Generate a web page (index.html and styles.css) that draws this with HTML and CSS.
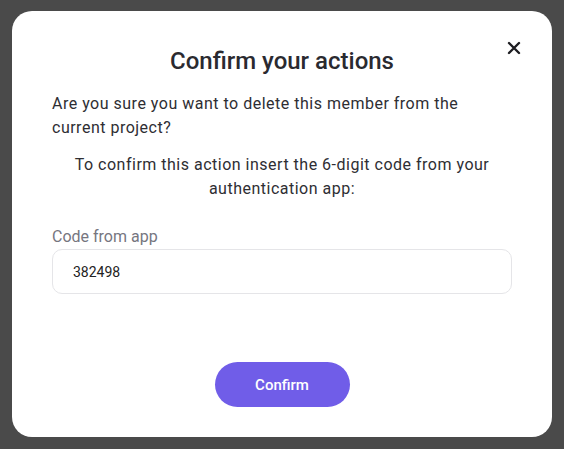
FILE: index.html
```html
<!DOCTYPE html>
<html>
<head>
<meta charset="utf-8">
<link rel="stylesheet" href="styles.css">
</head>
<body>
<div class="overlay">
  <div class="modal">
    <button class="close" aria-label="Close">
      <svg width="14" height="14" viewBox="0 0 14 14"><path d="M2 2L12 12M12 2L2 12" stroke="#1d1d22" stroke-width="2.4" stroke-linecap="round"/></svg>
    </button>
    <h1 class="title">Confirm your actions</h1>
    <p class="text">Are you sure you want to delete this member from the current project?</p>
    <p class="text center">To confirm this action insert the 6-digit code from your authentication app:</p>
    <label class="field">
      <span class="label">Code from app</span>
      <span class="input">382498</span>
    </label>
    <div class="actions">
      <button class="btn">Confirm</button>
    </div>
  </div>
</div>
</body>
</html>
```
FILE: styles.css
```css
* { box-sizing: border-box; }
html, body { margin: 0; padding: 0; }
body {
  background: #4a4a4a;
  font-family: Roboto, "Noto Sans", sans-serif;
  width: 564px;
  height: 449px;
  overflow: hidden;
}
.overlay {
  padding: 11px 12px 12px 12px;
}
.modal {
  position: relative;
  background: #fff;
  border-radius: 20px;
  width: 540px;
  height: 426px;
  padding: 35px 40px 30px 40px;
  display: flex;
  flex-direction: column;
}
.close {
  position: absolute;
  top: 30px;
  right: 31px;
  background: none;
  border: 0;
  padding: 0;
  width: 14px;
  height: 14px;
  display: flex;
}
.title {
  margin: 0;
  text-align: center;
  font-size: 24px;
  font-weight: 500;
  color: #2a2a30;
  line-height: 30px;
}
.text {
  margin: 16px 0 0 0;
  font-size: 16px;
  line-height: 24px;
  color: #2e2e33;
  letter-spacing: 0.5px;
}
.text.center { text-align: center; margin-top: 13px; }
.field {
  display: flex;
  flex-direction: column;
  margin-top: 24px;
}
.label {
  font-size: 16px;
  line-height: 24px;
  color: #76767f;
}
.input {
  margin-top: 0;
  height: 45px;
  border: 1px solid #e5e5e8;
  border-radius: 10px;
  padding: 0 20px;
  display: flex;
  align-items: center;
  font-size: 14px;
  color: #222;
}
.actions {
  margin-top: auto;
  display: flex;
  justify-content: center;
}
.btn {
  width: 135px;
  height: 45px;
  border: 0;
  border-radius: 23px;
  background: #705de8;
  color: #fff;
  font-family: Roboto, sans-serif;
  font-size: 15px;
  font-weight: 500;
}
```
